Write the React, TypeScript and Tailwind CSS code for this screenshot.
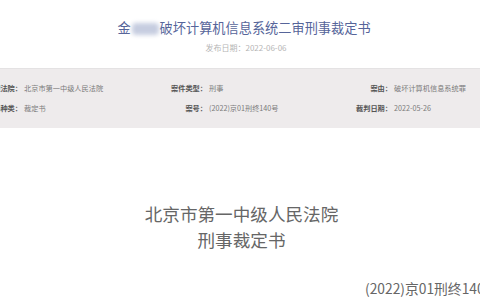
export default function App() {
  const rows = [
    [
      { label: "审理法院：", value: "北京市第一中级人民法院" },
      { label: "案件类型：", value: "刑事" },
      { label: "案由：", value: "破坏计算机信息系统罪" },
    ],
    [
      { label: "文书种类：", value: "裁定书" },
      { label: "案号：", value: "(2022)京01刑终140号" },
      { label: "裁判日期：", value: "2022-05-26" },
    ],
  ];

  return (
    <div className="w-[480px] h-[300px] overflow-hidden bg-white font-['Noto_Sans_CJK_SC','Noto_Sans',sans-serif]">
      <div className="h-[68px] flex flex-col items-center">
        <h1 className="mt-[18px] ml-[8px] text-[13.2px] leading-[20px] text-[#56659a] whitespace-nowrap">
          金
          <span className="inline-block align-middle w-[27px] h-[12px] mx-[1px] rounded-sm bg-[#c6cde0] blur-[2px]" />
          破坏计算机信息系统二审刑事裁定书
        </h1>
        <div className="mt-[4px] ml-[12px] text-[8px] leading-[12px] text-[#b5b5b5]">
          发布日期：2022-06-06
        </div>
      </div>

      <div className="h-[60px] bg-[#eeebec] border-t border-[#e4e2e3] py-[9px]">
        <div className="-ml-[37px]">
          {rows.map((row, i) => (
            <div key={i} className="flex h-[20px] items-center">
              {row.map((cell) => (
                <div
                  key={cell.label}
                  className="w-[185px] shrink-0 flex items-center text-[7.2px] whitespace-nowrap"
                >
                  <span className="w-[59px] shrink-0 text-right font-bold text-[#555]">{cell.label}</span>
                  <span className="ml-[2px] text-[#7a7a7a]">{cell.value}</span>
                </div>
              ))}
            </div>
          ))}
        </div>
      </div>

      <div className="pt-[73px] text-center text-[17.6px] leading-[26px] text-[#666] pl-[3px]">
        <p>北京市第一中级人民法院</p>
        <p>刑事裁定书</p>
      </div>
      <div className="mt-[25px] pl-[365px] text-[13.8px] leading-[20px] text-[#666] whitespace-nowrap">
        (2022)京01刑终140号
      </div>
    </div>
  );
}
